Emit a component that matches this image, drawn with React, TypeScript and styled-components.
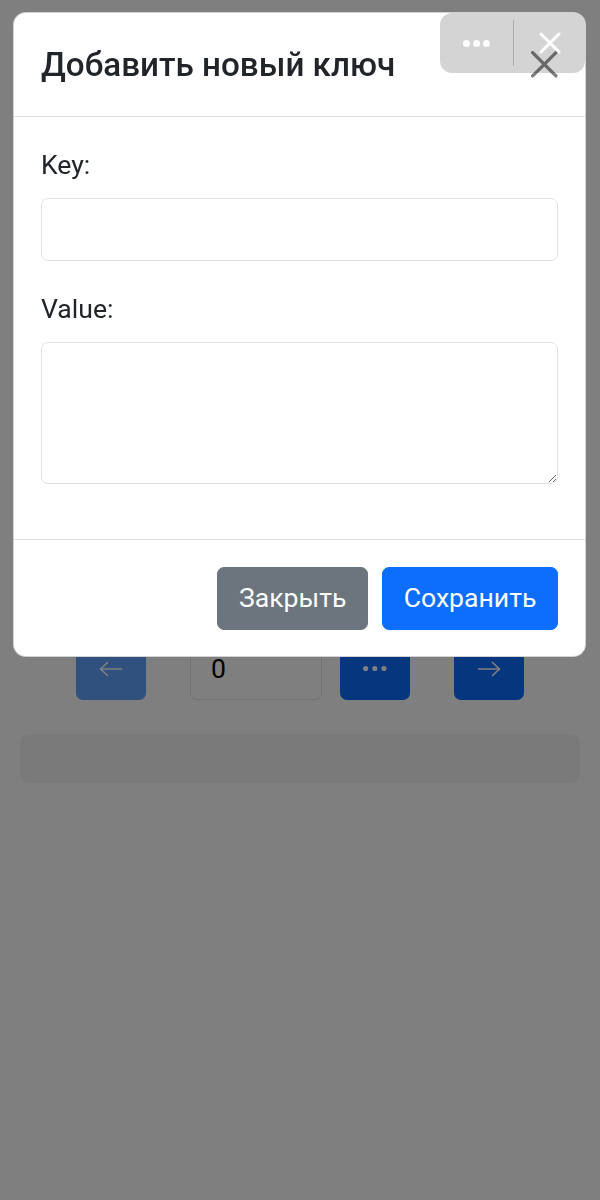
import React from "react";
import styled, { createGlobalStyle } from "styled-components";

const Global = createGlobalStyle`
  html, body { margin: 0; padding: 0; background: #ffffff; }
  body {
    font-family: Roboto, "Noto Sans", "Liberation Sans", sans-serif;
    color: #212529;
    -webkit-font-smoothing: antialiased;
  }
  * { box-sizing: border-box; }
`;

const Page = styled.main`
  min-height: 1200px;
  padding: 637px 20px 0;
  display: flex;
  flex-direction: column;
  gap: 34px;
`;

const Controls = styled.div`
  display: flex;
  justify-content: center;
  align-items: center;
  gap: 44px;
`;

const PagerGroup = styled.div`
  display: flex;
  align-items: center;
  gap: 18px;
`;

const NavButton = styled.button<{ $disabled?: boolean }>`
  width: 70px;
  height: 63px;
  border: 0;
  border-radius: 7px;
  background: #0d6efd;
  color: #ffffff;
  display: flex;
  align-items: center;
  justify-content: center;
  padding: 0;
  opacity: ${(p) => (p.$disabled ? 0.65 : 1)};
`;

const PageInput = styled.input`
  width: 132px;
  height: 63px;
  border: 1px solid #dee2e6;
  border-radius: 7px;
  padding: 0 20px;
  font-family: Roboto, sans-serif;
  font-size: 26.6px;
  color: #000000;
  background: #ffffff;
  outline: none;
`;

const InfoBar = styled.div`
  height: 49px;
  border-radius: 9px;
  background: #f5f5f5;
`;

const Backdrop = styled.div`
  position: fixed;
  inset: 0;
  background: rgba(0, 0, 0, 0.5);
`;

const ModalLayer = styled.div`
  position: fixed;
  inset: 0;
  padding: 12px 14px 12px 13px;
`;

const Dialog = styled.section`
  background: #ffffff;
  border: 1px solid rgba(0, 0, 0, 0.175);
  border-radius: 13px;
  display: flex;
  flex-direction: column;
`;

const Header = styled.header`
  display: flex;
  align-items: center;
  padding: 26.5px 27px 26.5px 27px;
  border-bottom: 1px solid #dee2e6;
`;

const Title = styled.h5`
  margin: 0;
  font-size: 33.2px;
  font-weight: 500;
  line-height: 50px;
  color: #212529;
`;

const CloseButton = styled.button`
  position: relative;
  z-index: 2;
  margin-left: auto;
  width: 27px;
  height: 27px;
  padding: 0;
  border: 0;
  background: transparent;
  opacity: 0.5;
  display: flex;
  align-items: center;
  justify-content: center;
`;

const Body = styled.div`
  padding: 26.5px 27px 28.5px;
  display: flex;
  flex-direction: column;
  gap: 26.6px;
`;

const Field = styled.div`
  display: flex;
  flex-direction: column;
  &:last-child { margin-bottom: 26.6px; }
`;

const Label = styled.label`
  font-size: 26.6px;
  line-height: 41.2px;
  margin-bottom: 13.3px;
  color: #212529;
`;

const TextInput = styled.input`
  height: 63px;
  width: 100%;
  border: 1px solid #dee2e6;
  border-radius: 7px;
  padding: 10px 20px;
  font-family: Roboto, sans-serif;
  font-size: 26.6px;
  background: #ffffff;
  outline: none;
`;

const TextArea = styled.textarea`
  height: 142px;
  width: 100%;
  border: 1px solid #dee2e6;
  border-radius: 7px;
  padding: 10px 20px;
  font-family: Roboto, sans-serif;
  font-size: 26.6px;
  line-height: 40px;
  background: #ffffff;
  outline: none;
  resize: vertical;
`;

const Footer = styled.footer`
  display: flex;
  justify-content: flex-end;
  align-items: center;
  gap: 13.3px;
  padding: 26.6px 26.6px;
  border-top: 1px solid #dee2e6;
`;

const ActionButton = styled.button<{ $variant: "secondary" | "primary" }>`
  height: 63px;
  padding: 0 21px;
  border: 1px solid ${(p) => (p.$variant === "primary" ? "#0d6efd" : "#6c757d")};
  border-radius: 7px;
  background: ${(p) => (p.$variant === "primary" ? "#0d6efd" : "#6c757d")};
  color: #ffffff;
  font-family: Roboto, sans-serif;
  font-size: 26.6px;
  line-height: 40px;
`;

const MiniAppBar = styled.div`
  position: fixed;
  top: 13px;
  right: 15px;
  width: 145px;
  height: 60px;
  border-radius: 12px;
  background: rgba(0, 0, 0, 0.17);
  display: flex;
  align-items: center;
  z-index: 1;
`;

const BarSlot = styled.div<{ $w: number }>`
  width: ${(p) => p.$w}px;
  height: 100%;
  display: flex;
  align-items: center;
  justify-content: center;
`;

const BarDivider = styled.div`
  width: 1.5px;
  height: 46px;
  background: rgba(0, 0, 0, 0.2);
`;

const Arrow = ({ dir }: { dir: "left" | "right" }) => (
  <svg width="24" height="16" viewBox="0 0 24 16" fill="none" stroke="#ffffff" strokeWidth="1.7" strokeLinecap="round" strokeLinejoin="round">
    {dir === "left" ? (
      <>
        <path d="M1.5 8H22.5" />
        <path d="M8.5 1.5L1.5 8L8.5 14.5" />
      </>
    ) : (
      <>
        <path d="M1.5 8H22.5" />
        <path d="M15.5 1.5L22.5 8L15.5 14.5" />
      </>
    )}
  </svg>
);

const Dots = ({ r, gap, color }: { r: number; gap: number; color: string }) => {
  const w = r * 6 + gap * 2;
  return (
    <svg width={w} height={r * 2} viewBox={`0 0 ${w} ${r * 2}`}>
      {[0, 1, 2].map((i) => (
        <circle key={i} cx={r + i * (2 * r + gap)} cy={r} r={r} fill={color} />
      ))}
    </svg>
  );
};

const BootstrapX = () => (
  <svg width="26.6" height="26.6" viewBox="0 0 16 16">
    <path
      fill="#000"
      d="M.293.293a1 1 0 0 1 1.414 0L8 6.586 14.293.293a1 1 0 1 1 1.414 1.414L9.414 8l6.293 6.293a1 1 0 0 1-1.414 1.414L8 9.414l-6.293 6.293a1 1 0 0 1-1.414-1.414L6.586 8 .293 1.707a1 1 0 0 1 0-1.414"
    />
  </svg>
);

const WhiteX = () => (
  <svg width="22" height="22" viewBox="0 0 22 22" stroke="#ffffff" strokeWidth="3" strokeLinecap="round">
    <path d="M2 2L20 20M20 2L2 20" />
  </svg>
);

export default function App() {
  return (
    <>
      <Global />
      <Page>
        <Controls>
          <NavButton $disabled aria-label="Назад">
            <Arrow dir="left" />
          </NavButton>
          <PagerGroup>
            <PageInput defaultValue="0" />
            <NavButton aria-label="Ещё">
              <Dots r={2.6} gap={4} color="#ffffff" />
            </NavButton>
          </PagerGroup>
          <NavButton aria-label="Вперёд">
            <Arrow dir="right" />
          </NavButton>
        </Controls>
        <InfoBar />
      </Page>
      <Backdrop />
      <ModalLayer>
        <Dialog>
          <Header>
            <Title>Добавить новый ключ</Title>
            <CloseButton aria-label="Close">
              <BootstrapX />
            </CloseButton>
          </Header>
          <Body>
            <Field>
              <Label>Key:</Label>
              <TextInput />
            </Field>
            <Field>
              <Label>Value:</Label>
              <TextArea rows={3} />
            </Field>
          </Body>
          <Footer>
            <ActionButton $variant="secondary">Закрыть</ActionButton>
            <ActionButton $variant="primary">Сохранить</ActionButton>
          </Footer>
        </Dialog>
      </ModalLayer>
      <MiniAppBar>
        <BarSlot $w={72.5}>
          <Dots r={3.5} gap={3} color="#ffffff" />
        </BarSlot>
        <BarDivider />
        <BarSlot $w={71}>
          <WhiteX />
        </BarSlot>
      </MiniAppBar>
    </>
  );
}
